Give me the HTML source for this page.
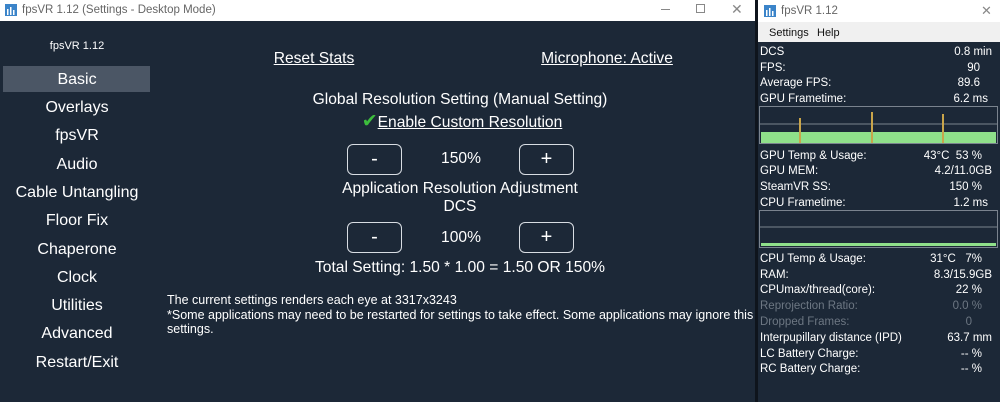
<!DOCTYPE html>
<html><head><meta charset="utf-8"><style>
*{margin:0;padding:0;box-sizing:border-box}
body{width:1000px;height:402px;background:#1c2837;font-family:"Liberation Sans",sans-serif;color:#fff;position:relative;overflow:hidden}
.a{position:absolute;white-space:nowrap}
.c{transform:translateX(-50%)}
.side{font-size:16px}
.m{font-size:15.6px}
.btn{position:absolute;border:1.5px solid #d8dde3;border-radius:6px;width:55px;height:31px;text-align:center;font-size:20px;line-height:28px}
.r{position:absolute;left:760px;width:232px;font-size:11.5px;height:16px}
.r span{position:absolute;right:0}
.g{color:#6d7783}
</style></head><body>
<div class="a" style="left:0;top:0;width:755px;height:21px;background:#fff"></div>
<svg class="a" style="left:5px;top:4px" width="12" height="12"><rect width="12" height="12" fill="#3b84c9"/><rect x="2" y="5" width="1.5" height="6" fill="#fff"/><rect x="5" y="3" width="1.5" height="8" fill="#fff"/><rect x="8" y="6" width="1.5" height="5" fill="#fff"/></svg>
<div class="a" style="left:22px;top:4px;font-size:11.5px;color:#666">fpsVR 1.12 (Settings - Desktop Mode)</div>
<div class="a" style="left:661px;top:9px;width:9px;height:1px;background:#888"></div>
<div class="a" style="left:696px;top:4px;width:9px;height:9px;border:1px solid #888"></div>
<div class="a" style="left:731px;top:1px;font-size:14px;color:#888">✕</div>
<div class="a" style="left:755px;top:0;width:3px;height:402px;background:#0e141c"></div>
<div class="a c" style="left:77px;top:40px;font-size:11px">fpsVR 1.12</div>
<div class="a" style="left:3px;top:66px;width:147px;height:26px;background:#4b5665"></div>
<div class="a c side" style="left:77px;top:71px">Basic</div>
<div class="a c side" style="left:77px;top:99px">Overlays</div>
<div class="a c side" style="left:77px;top:127px">fpsVR</div>
<div class="a c side" style="left:77px;top:156px">Audio</div>
<div class="a c side" style="left:77px;top:184px">Cable Untangling</div>
<div class="a c side" style="left:77px;top:212px">Floor Fix</div>
<div class="a c side" style="left:77px;top:241px">Chaperone</div>
<div class="a c side" style="left:77px;top:269px">Clock</div>
<div class="a c side" style="left:77px;top:297px">Utilities</div>
<div class="a c side" style="left:77px;top:325px">Advanced</div>
<div class="a c side" style="left:77px;top:354px">Restart/Exit</div>
<div class="a c m" style="left:314px;top:50px;text-decoration:underline">Reset Stats</div>
<div class="a c m" style="left:607px;top:50px;text-decoration:underline">Microphone: Active</div>
<div class="a c m" style="left:460px;top:91px">Global Resolution Setting (Manual Setting)</div>
<div class="a c m" style="left:462px;top:114px"><span style="color:#3dbd3d;font-size:19px;line-height:15px">✔</span><span style="text-decoration:underline">Enable Custom Resolution</span></div>
<div class="btn" style="left:347px;top:144px">-</div>
<div class="a c m" style="left:461px;top:150px">150%</div>
<div class="btn" style="left:519px;top:144px">+</div>
<div class="a c m" style="left:460px;top:180px">Application Resolution Adjustment</div>
<div class="a c m" style="left:460px;top:198px">DCS</div>
<div class="btn" style="left:347px;top:222px">-</div>
<div class="a c m" style="left:461px;top:229px">100%</div>
<div class="btn" style="left:519px;top:222px">+</div>
<div class="a c m" style="left:460px;top:259px">Total Setting: 1.50 * 1.00 = 1.50 OR 150%</div>
<div class="a" style="left:167px;top:293px;font-size:12.5px;line-height:14.5px">The current settings renders each eye at 3317x3243<br>*Some applications may need to be restarted for settings to take effect. Some applications may ignore this<br>settings.</div>
<div class="a" style="left:758px;top:0;width:242px;height:22px;background:#fff"></div>
<svg class="a" style="left:764px;top:5px" width="12" height="12"><rect width="12" height="12" fill="#3b84c9"/><rect x="2" y="5" width="1.5" height="6" fill="#fff"/><rect x="5" y="3" width="1.5" height="8" fill="#fff"/><rect x="8" y="6" width="1.5" height="5" fill="#fff"/></svg>
<div class="a" style="left:781px;top:5px;font-size:11.5px;color:#666">fpsVR 1.12</div>
<div class="a" style="left:981px;top:3px;font-size:13px;color:#888">✕</div>
<div class="a" style="left:758px;top:22px;width:242px;height:20px;background:#f0f0f0"></div>
<div class="a" style="left:769px;top:27px;font-size:11px;color:#111">Settings</div>
<div class="a" style="left:817px;top:27px;font-size:11px;color:#111">Help</div>
<div class="r" style="top:46px">DCS<span>0.8 min</span></div>
<div class="r" style="top:62px">FPS:<span style="right:12px">90</span></div>
<div class="r" style="top:77px">Average FPS:<span style="right:12px">89.6</span></div>
<div class="r" style="top:93px">GPU Frametime:<span style="right:4px">6.2 ms</span></div>
<svg class="a" style="left:759px;top:106px" width="239" height="38"><rect x="0.5" y="0.5" width="238" height="37" fill="#1c2837" stroke="#7a838e"/><line x1="1" y1="18" x2="238" y2="18" stroke="#7a838e"/><rect x="2" y="26" width="235" height="11" fill="#8fe08a"/><rect x="40" y="12" width="2" height="25" fill="#c9a54a"/><rect x="112" y="6" width="2" height="31" fill="#c9a54a"/><rect x="183" y="8" width="2" height="29" fill="#c9a54a"/></svg>
<div class="r" style="top:150px">GPU Temp &amp; Usage:<span style="right:10px">43°C&nbsp;&nbsp;53 %</span></div>
<div class="r" style="top:165px">GPU MEM:<span>4.2/11.0GB</span></div>
<div class="r" style="top:181px">SteamVR SS:<span style="right:10px">150 %</span></div>
<div class="r" style="top:197px">CPU Frametime:<span style="right:4px">1.2 ms</span></div>
<svg class="a" style="left:759px;top:210px" width="239" height="38"><rect x="0.5" y="0.5" width="238" height="37" fill="#1c2837" stroke="#7a838e"/><line x1="1" y1="17" x2="238" y2="17" stroke="#7a838e"/><rect x="2" y="33" width="235" height="3" fill="#8fe08a"/></svg>
<div class="r" style="top:253px">CPU Temp &amp; Usage:<span style="right:10px">31°C&nbsp;&nbsp;&nbsp;7%</span></div>
<div class="r" style="top:269px">RAM:<span>8.3/15.9GB</span></div>
<div class="r" style="top:284px">CPUmax/thread(core):<span style="right:10px">22 %</span></div>
<div class="r g" style="top:300px">Reprojection Ratio:<span style="right:10px">0.0 %</span></div>
<div class="r g" style="top:316px">Dropped Frames:<span style="right:20px">0</span></div>
<div class="r" style="top:332px">Interpupillary distance (IPD)<span style="right:0">63.7 mm</span></div>
<div class="r" style="top:348px">LC Battery Charge:<span style="right:10px">-- %</span></div>
<div class="r" style="top:363px">RC Battery Charge:<span style="right:10px">-- %</span></div>
</body></html>
